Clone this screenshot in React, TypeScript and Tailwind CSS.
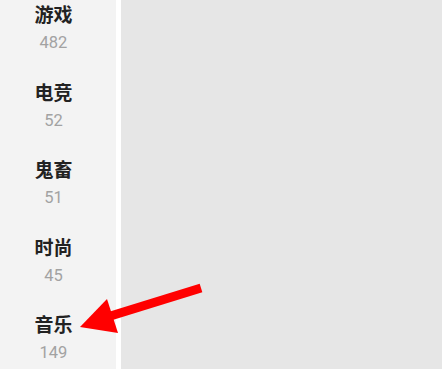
const categories = [
  { name: '游戏', count: 482 },
  { name: '电竞', count: 52 },
  { name: '鬼畜', count: 51 },
  { name: '时尚', count: 45 },
  { name: '音乐', count: 149 },
];

export default function App() {
  return (
    <div
      className="relative flex h-[369px] w-[442px] overflow-hidden bg-[#e6e6e6]"
      style={{ fontFamily: 'Roboto, "Noto Sans CJK SC", sans-serif' }}
    >
      <aside className="h-full w-[116px] shrink-0 bg-[#f3f3f3]">
        <ul className="-mt-[10px] w-[107px]">
          {categories.map(({ name, count }) => (
            <li key={name} className="flex h-[77.5px] flex-col items-center pt-[14px]">
              <span className="text-[19px] font-bold leading-[24px] text-[#222]">{name}</span>
              <span className="mt-[4px] text-[16.5px] leading-[22px] text-[#a2a2a2]">{count}</span>
            </li>
          ))}
        </ul>
      </aside>
      <div className="h-full w-[5px] shrink-0 bg-white" />
      <main className="flex-1" />

      <svg
        className="pointer-events-none absolute left-0 top-0"
        width="442"
        height="369"
        viewBox="0 0 442 369"
      >
        <line x1="201" y1="288" x2="104" y2="318" stroke="#ff0000" strokeWidth="9" />
        <polygon points="80,327 107,299 118,333" fill="#ff0000" />
      </svg>
    </div>
  );
}
